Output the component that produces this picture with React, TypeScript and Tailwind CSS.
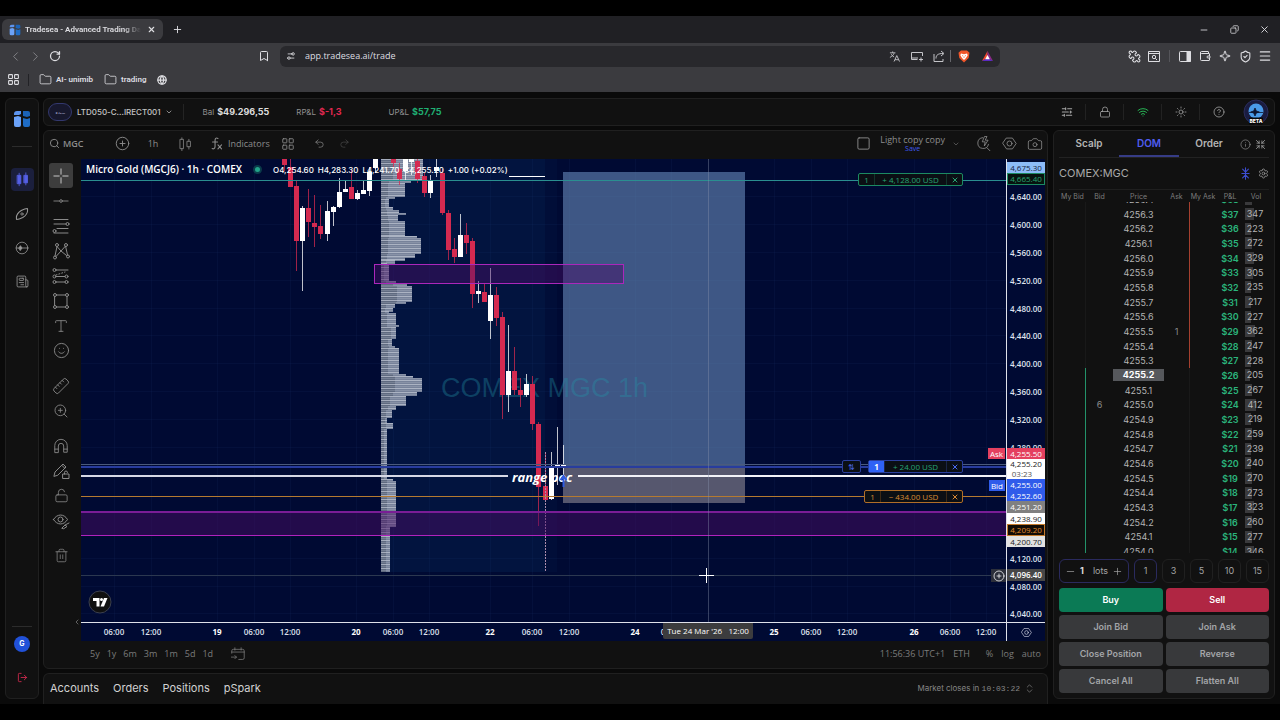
import { useEffect, useRef, useState } from "react";
import type { ReactNode } from "react";
import {
  Bookmark,
  Camera,
  ChevronDown,
  ChevronLeft,
  ChevronRight,
  ChevronsUpDown,
  CircleHelp,
  CirclePlus,
  Copy,
  Folder,
  Globe,
  Info,
  LayoutGrid,
  Lock,
  LockOpen,
  LogOut,
  Menu,
  Minus,
  Newspaper,
  Plus,
  Puzzle,
  Redo2,
  RotateCw,
  Ruler,
  Search,
  Settings,
  Settings2,
  ShieldCheck,
  Shrink,
  Smile,
  Sparkle,
  Square,
  Sun,
  Trash2,
  Type,
  Undo2,
  Wallet,
  Wifi,
  X,
  ZoomIn,
} from "lucide-react";

interface IconButtonProps {
  label: string;
  className?: string;
  children: ReactNode;
}

const IconButton = ({ label, className = "", children }: IconButtonProps) => (
  <button
    type="button"
    aria-label={label}
    className={`flex shrink-0 items-center justify-center ${className}`}
  >
    {children}
  </button>
);

const Glyph = ({ size = 18, children }: { size?: number; children: ReactNode }) => (
  <svg
    width={size}
    height={size}
    viewBox="0 0 18 18"
    fill="none"
    stroke="currentColor"
    strokeWidth="1"
    strokeLinecap="round"
    strokeLinejoin="round"
  >
    {children}
  </svg>
);

const TradeseaLogo = ({ size = 18 }: { size?: number }) => (
  <svg width={size} height={size} viewBox="0 0 18 18">
    <path d="M1 5V4a3 3 0 0 1 3-3h4v3l-2 1z" fill="#5c94ef" />
    <path d="M10 1h5a2 2 0 0 1 2 2v3l-3 1-4-1z" fill="#1b63b8" />
    <path d="M1 7l4-1 3 1v8a2 2 0 0 1-2 2H3a2 2 0 0 1-2-2z" fill="#6ba2f8" />
    <path d="M10 8l4 1 3-1v7a2 2 0 0 1-2 2h-3a2 2 0 0 1-2-2z" fill="#1e6cc6" />
  </svg>
);

const HexSettings = ({ size = 16 }: { size?: number }) => (
  <Glyph size={size}>
    <path d="M5.500 2.500h7L17 9l-4.500 6.500h-7L1 9z" />
    <circle cx="9" cy="9" r="3" />
  </Glyph>
);

/* ---------- browser chrome ---------- */

const BrowserBar = () => (
  <header className="shrink-0 bg-[#3b3b3f] font-['Open_Sans','Noto_Sans',sans-serif] text-[#dedee2]">
    <div className="flex h-[27px] items-center bg-[#202024] pl-[2px]">
      <div className="flex h-[21px] w-[161px] items-center gap-1 rounded-md bg-[#3b3b3f] pl-[7px]">
        <TradeseaLogo size={12} />
        <span className="w-[116px] overflow-hidden whitespace-nowrap font-[Roboto,sans-serif] text-[8px] font-semibold [mask-image:linear-gradient(to_right,black_85%,transparent)]">
          Tradesea - Advanced Trading Dashboard
        </span>
        <IconButton label="Close tab" className="size-3">
          <X size={9} strokeWidth={3} />
        </IconButton>
      </div>
      <IconButton label="New tab" className="ml-1 size-5">
        <Plus size={11} />
      </IconButton>
      <div className="ml-auto flex">
        <IconButton label="Minimize" className="w-[30px]">
          <Minus size={10} />
        </IconButton>
        <IconButton label="Restore" className="w-[30px]">
          <Copy size={9} className="-scale-x-100" />
        </IconButton>
        <IconButton label="Close" className="w-[31px]">
          <X size={11} />
        </IconButton>
      </div>
    </div>

    <div className="grid h-[26px] grid-cols-[280px_1fr_280px] items-center">
      <div className="flex items-center pl-[5px]">
        <IconButton label="Back" className="w-5 text-[#85858a]">
          <ChevronLeft size={15} strokeWidth={1.500} />
        </IconButton>
        <IconButton label="Forward" className="w-5 text-[#85858a]">
          <ChevronRight size={15} strokeWidth={1.500} />
        </IconButton>
        <IconButton label="Reload" className="w-5">
          <RotateCw size={12} strokeWidth={2.500} />
        </IconButton>
        <IconButton label="Bookmark this page" className="ml-auto w-8">
          <Bookmark size={12} />
        </IconButton>
      </div>
      <div className="flex h-[21px] items-center rounded-md bg-[#28282c] pl-[6px]">
        <Settings2 size={10} className="-scale-x-100" />
        <input
          aria-label="Address"
          defaultValue="app.tradesea.ai/trade"
          className="ml-[9px] min-w-0 flex-1 bg-transparent text-[9px] outline-none"
        />
        <div className="flex items-center text-[#c4c4c8]">
          <IconButton label="Translate" className="w-[22px]">
            <svg width="11" height="11" viewBox="0 0 12 12" fill="none" stroke="currentColor">
              <path d="M1 2h6M4 .5V2M5.500 2.500C5 4.500 3 6 1 7M2.500 3.500C3 5 4.500 6 5.500 6.500M5.500 11.500L8.500 5l3 6.500M6.500 9.500h4" />
            </svg>
          </IconButton>
          <IconButton label="Send to device" className="w-[23px]">
            <svg width="12" height="11" viewBox="0 0 12 11" fill="none" stroke="currentColor">
              <path d="M11.500 5V1.500H.5v7h6M1 7h6M8 8.500h4M10 6.500v4" />
            </svg>
          </IconButton>
          <IconButton label="Share" className="w-[22px]">
            <svg width="12" height="12" viewBox="0 0 12 12" fill="none" stroke="currentColor">
              <path d="M1 4v7.500h9V9M3 8.500C3 5 5 3.500 10 3.500M8 1l3 2.500-3 2.500" />
            </svg>
          </IconButton>
          <span className="h-3 w-px bg-[#66666b]" />
          <IconButton label="Brave Shields" className="w-[25px]">
            <svg width="12" height="13" viewBox="0 0 12 13">
              <path d="M3 .5h6l2.500 2.300-.8 5.200L6 12.500 1.300 8 .5 2.800z" fill="#f0562a" />
              <path d="M3 3.500l3 .7 3-.7.7 1.800L8 8l-2 2-2-2-1.700-2.700z" fill="#fff" />
              <path d="M4 5.500l1.200.5M8 5.500L6.800 6M6 6.500v1.500" stroke="#f0562a" strokeWidth=".7" />
            </svg>
          </IconButton>
          <IconButton label="Brave Rewards" className="mr-[2px] w-[22px]">
            <svg width="11" height="10" viewBox="0 0 12 11">
              <path d="M6 0L0 11l6-3z" fill="#f0492d" />
              <path d="M6 0l6 11-6-3z" fill="#8c2a88" />
              <path d="M0 11h12L6 7.500z" fill="#5b2bc4" />
              <path d="M6 4.500L3.500 9h5z" fill="#fff" />
            </svg>
          </IconButton>
        </div>
      </div>
      <div className="flex items-center justify-end pr-[5px]">
        <IconButton label="Extensions" className="w-5">
          <Puzzle size={13} className="-rotate-90" />
        </IconButton>
        <IconButton label="Search tabs" className="mr-[5px] w-5">
          <svg width="12" height="11" viewBox="0 0 12 11" fill="none" stroke="currentColor">
            <path d="M.5.500h11v10H.5zM.5 2.500h11M7.300 7.300l1.700 1.700" />
            <circle cx="6" cy="6" r="1.700" />
          </svg>
        </IconButton>
        <span className="mr-[5px] h-3 w-px bg-[#55555a]" />
        <IconButton label="Sidebar" className="w-5">
          <svg width="12" height="11" viewBox="0 0 12 11" fill="none" stroke="currentColor">
            <rect x=".5" y=".5" width="11" height="10" rx="1" />
            <path d="M8 .5h3.500v10H8z" fill="currentColor" />
          </svg>
        </IconButton>
        <IconButton label="Wallet" className="w-5">
          <Wallet size={12} />
        </IconButton>
        <IconButton label="Leo AI" className="w-5">
          <Sparkle size={12} />
        </IconButton>
        <IconButton label="VPN" className="w-5">
          <ShieldCheck size={13} />
        </IconButton>
        <IconButton label="Menu" className="w-5">
          <Menu size={14} />
        </IconButton>
      </div>
    </div>

    <nav className="flex h-[23px] items-center pb-[2px] pl-[7px] font-[Roboto,sans-serif] text-[8px] font-semibold">
      <LayoutGrid size={13} />
      <span className="ml-[8px] h-3 w-px bg-[#222226]" />
      <a href="#ai-unimib" className="ml-[10px] flex items-center gap-1">
        <Folder size={13} strokeWidth={1.500} />
        AI- unimib
      </a>
      <a href="#trading" className="ml-[11px] flex items-center gap-1">
        <Folder size={13} strokeWidth={1.500} />
        trading
      </a>
      <a href="#site" aria-label="Saved site" className="ml-[11px]">
        <Globe size={10} strokeWidth={3} />
      </a>
    </nav>
  </header>
);

/* ---------- app sidebar and top bar ---------- */

const SideNav = () => (
  <aside className="mb-[5px] flex w-[34px] shrink-0 flex-col items-center rounded-md border border-[#202020] bg-[#111111] text-[#9a9a9a]">
    <div className="mt-[11px]">
      <TradeseaLogo size={18} />
    </div>
    <span className="mt-[18px] h-px w-5 bg-[#2c2c2c]" />
    <nav className="mt-[21px] flex flex-col gap-[11px]">
      <IconButton label="Chart" className="size-[23px] rounded-[4px] bg-[#1b1f3d] text-[#5560e6]">
        <Glyph size={15}>
          <rect x="3" y="4" width="4" height="10" fill="currentColor" />
          <rect x="11" y="4" width="4" height="9" fill="currentColor" />
          <path d="M5 1.500v15M13 1v14.500" />
        </Glyph>
      </IconButton>
      <IconButton label="Explore" className="size-[23px]">
        <Glyph size={14}>
          <path d="M2 16C1 11 4 7 8 4.500 11 3 14 2 16 2c1 5-2 9-6 11.500C7 15 4 16 2 16z" strokeWidth="1.300" />
          <circle cx="9" cy="9" r="1.500" />
        </Glyph>
      </IconButton>
      <IconButton label="Replay" className="size-[23px]">
        <Glyph size={14}>
          <circle cx="9" cy="9" r="7.500" />
          <path d="M1.500 9h15M5 9l2-3 2 3-2 3z" fill="currentColor" />
        </Glyph>
      </IconButton>
      <IconButton label="News" className="size-[23px]">
        <Newspaper size={13} strokeWidth={1.500} className="-scale-x-100" />
      </IconButton>
    </nav>
    <span className="mt-auto h-px w-5 bg-[#2c2c2c]" />
    <button
      type="button"
      className="mt-[9px] size-4 rounded-full bg-[#2151d8] font-[Inter,sans-serif] text-[7px] font-bold text-white"
    >
      G
    </button>
    <IconButton label="Log out" className="mb-[15px] mt-[20px] text-[#c9284c]">
      <LogOut size={11} />
    </IconButton>
  </aside>
);

const topActions = [
  {
    label: "Preferences",
    icon: (
      <Glyph size={12}>
        <path d="M2 4h5M10 4h6M2 9h9M14 9h2M2 14h3M8 14h8M7 2.500v3M14 7.500v3M5 12.500v3" strokeWidth="1.600" />
      </Glyph>
    ),
  },
  { label: "Lock", icon: <Lock size={12} strokeWidth={1.500} /> },
  { label: "Connection", icon: <Wifi size={12} className="text-[#27b354]" /> },
  { label: "Theme", icon: <Sun size={12} strokeWidth={1.500} /> },
  { label: "Help", icon: <CircleHelp size={12} strokeWidth={1.500} /> },
];

const TopBar = () => (
  <header className="flex h-[28px] shrink-0 items-center rounded-md border border-[#202020] bg-[#111111] pl-1 text-[8px] text-[#8f8f8f]">
    <button type="button" className="flex items-center font-medium text-[#c4c4c4]">
      <span className="mr-[5px] flex h-[18px] w-6 items-center justify-center rounded-full border border-[#33386e] bg-[#17182d] text-[6px] text-[#8d90b5]">
        •~–
      </span>
      LTD050-C...IRECT001
      <ChevronDown size={8} className="ml-1" />
    </button>
    <span className="ml-[10px] mr-[19px] h-4 w-px bg-[#242424]" />
    <span>Bal</span>
    <span className="ml-[3px] text-[9px] font-bold text-[#dcdcdc]">$49.296,55</span>
    <span className="ml-[27px]">RP&amp;L</span>
    <span className="ml-[3px] text-[9px] font-bold text-[#e02850]">$-1,3</span>
    <span className="ml-[47px]">UP&amp;L</span>
    <span className="ml-[3px] text-[9px] font-bold text-[#1fae72]">$57,75</span>
    <div className="ml-auto flex text-[#a8a8a8]">
      {topActions.map(({ label, icon }) => (
        <IconButton
          key={label}
          label={label}
          className="h-4 w-[38px] border-r border-[#222222] last:border-r-0"
        >
          {icon}
        </IconButton>
      ))}
    </div>
    <button type="button" aria-label="Tradesea beta" className="flex w-[36px] justify-center">
      <svg width="26" height="26" viewBox="0 0 26 26">
        <circle cx="13" cy="13" r="12" fill="#1a1c40" stroke="#2a2d5c" />
        <circle cx="13" cy="12" r="7.500" fill="#4a9be8" />
        <path d="M6 13.500h14M12 9l1.300 3 3 1-3 1-1.300 3-1.300-3-3-1 3-1z" fill="#0e1530" stroke="#0e1530" strokeWidth=".8" />
        <rect x="6" y="18.500" width="14" height="7" rx="1" fill="#080808" />
        <text x="13" y="24" textAnchor="middle" fontSize="5" fontWeight="800" fill="#ffffff">
          BETA
        </text>
      </svg>
    </button>
  </header>
);

/* ---------- chart ---------- */

const ChartToolbar = () => (
  <div className="flex h-[28px] shrink-0 items-center pb-[3px] text-[9px] text-[#8c8c8c]">
    <button type="button" className="flex w-[66px] items-center gap-[3px] pl-[5px] font-semibold">
      <Search size={11} />
      MGC
    </button>
    <IconButton label="Compare" className="w-6">
      <CirclePlus size={15} strokeWidth={1.500} />
    </IconButton>
    <button type="button" className="w-[38px]">
      1h
    </button>
    <IconButton label="Chart type" className="w-[26px]">
      <Glyph size={14}>
        <path d="M3 3h4v12H3zM5 1v2M5 15v2.500M12 5.500h4v7h-4zM14 3v2.500M14 12.500v3" />
      </Glyph>
    </IconButton>
    <button type="button" className="flex w-[78px] items-center gap-[5px] pl-[12px]">
      <Glyph size={13}>
        <path d="M11 2c-3-1.500-4 0-4 3v8c0 3-2 4-4 3M3.500 7h7M11 11l5 5.500M16 11l-5 5.500" strokeWidth="1.500" />
      </Glyph>
      Indicators
    </button>
    <IconButton label="Templates" className="w-6">
      <LayoutGrid size={14} strokeWidth={1.500} />
    </IconButton>
    <IconButton label="Undo" className="ml-[7px] w-6">
      <Undo2 size={11} strokeWidth={1.500} />
    </IconButton>
    <IconButton label="Redo" className="w-[26px] text-[#4a4a4a]">
      <Redo2 size={11} strokeWidth={1.500} />
    </IconButton>

    <div className="ml-auto flex items-center">
      <IconButton label="Layout setup" className="mr-[9px]">
        <Square size={15} strokeWidth={1.500} />
      </IconButton>
      <button type="button" className="flex flex-col items-center leading-[10px]">
        Light copy copy
        <span className="text-[7px] leading-[7px] text-[#3f5bf0]">Save</span>
      </button>
      <IconButton label="Manage layouts" className="mr-[3px] w-[22px]">
        <ChevronDown size={8} strokeWidth={1.500} />
      </IconButton>
      <IconButton label="Quick search" className="w-[26px]">
        <Glyph size={15}>
          <path d="M8 2a6.500 6.500 0 1 0 7 8M13 14l4 4M10 1L7.500 7H11l-1 5 4.500-7H11l2-4z" />
        </Glyph>
      </IconButton>
      <IconButton label="Chart settings" className="w-[26px]">
        <HexSettings size={15} />
      </IconButton>
      <IconButton label="Snapshot" className="w-[25px]">
        <Camera size={16} strokeWidth={1.200} />
      </IconButton>
    </div>
  </div>
);

const toolGroups = [
  [
    {
      label: "Trend line",
      icon: (
        <Glyph size={16}>
          <path d="M1 9h6M11 9h6" />
          <circle cx="9" cy="9" r="1.500" />
        </Glyph>
      ),
    },
    {
      label: "Fibonacci retracement",
      icon: (
        <Glyph>
          <path d="M2 2.500h14M2 7h12M5 11.500h11M2 16h14" />
          <circle cx="15.500" cy="7" r="1.500" />
          <circle cx="2.500" cy="14" r="1.500" />
        </Glyph>
      ),
    },
    {
      label: "Pattern",
      icon: (
        <Glyph>
          <path d="M3 14L5 4.500l4 4.500 4.500-5L15.500 13M4 14.500L9 9l5.500 4.500" />
          <circle cx="3" cy="15.500" r="1.500" />
          <circle cx="5" cy="3" r="1.500" />
          <circle cx="14" cy="3" r="1.500" />
          <circle cx="16" cy="14.500" r="1.500" />
        </Glyph>
      ),
    },
    {
      label: "Prediction",
      icon: (
        <Glyph>
          <path d="M4 3h12M4 9.500h9M4 15h9" />
          <path d="M4 8l9-3" strokeDasharray="1 2" />
          <circle cx="2.500" cy="3" r="1.500" />
          <circle cx="2.500" cy="9.500" r="1.500" />
          <circle cx="2.500" cy="15" r="1.500" />
          <circle cx="14.500" cy="9.500" r="1.500" />
          <circle cx="14.500" cy="15" r="1.500" />
        </Glyph>
      ),
    },
    {
      label: "Shapes",
      icon: (
        <Glyph>
          <rect x="3" y="3" width="12" height="12" />
          <circle cx="3" cy="3" r="1.500" fill="#111111" />
          <circle cx="15" cy="3" r="1.500" fill="#111111" />
          <circle cx="3" cy="15" r="1.500" fill="#111111" />
          <circle cx="15" cy="15" r="1.500" fill="#111111" />
        </Glyph>
      ),
    },
    { label: "Text", icon: <Type size={16} strokeWidth={1.300} /> },
    { label: "Icons", icon: <Smile size={17} strokeWidth={1.300} /> },
  ],
  [
    { label: "Measure", icon: <Ruler size={18} strokeWidth={1.200} className="-scale-x-100" /> },
    { label: "Zoom in", icon: <ZoomIn size={16} strokeWidth={1.300} /> },
  ],
  [
    {
      label: "Magnet",
      icon: (
        <Glyph size={16}>
          <path d="M2 16V8.500a7 7 0 0 1 14 0V16h-4V9a3 3 0 0 0-6 0v7zM2 12.500h4M12 12.500h4" />
        </Glyph>
      ),
    },
    {
      label: "Keep drawing",
      icon: (
        <Glyph>
          <path d="M2 14l1-4 8-8 3 3-8 8zM10 3.500l2.500 2.500M11 12h6v4.500h-6zM12.500 12v-1.500a1.500 1.500 0 0 1 3 0" />
        </Glyph>
      ),
    },
    { label: "Lock drawings", icon: <LockOpen size={15} strokeWidth={1.300} /> },
    {
      label: "Hide drawings",
      icon: (
        <Glyph>
          <path d="M1.500 7.500C5 1.500 12 1.500 15.500 7.500 12 13.500 5 13.500 1.500 7.500zM10 16l3-3 2 1.500-3 2zM13 13l4-2" />
          <circle cx="8.500" cy="7.500" r="2.500" />
        </Glyph>
      ),
    },
  ],
  [{ label: "Remove drawings", icon: <Trash2 size={15} strokeWidth={1.200} /> }],
];

const DrawingTools = () => (
  <div className="relative flex w-[37px] shrink-0 flex-col gap-[10px] pl-[5px] pt-1 text-[#8a8a8a]">
    {toolGroups.map((group, i) => (
      <div key={group[0].label} className="flex w-6 flex-col">
        {i === 0 && (
          <IconButton label="Cross" className="h-[25px] w-6 rounded-[3px] bg-[#3d3d3d] text-[#d8d8d8]">
            <Glyph size={16}>
              <path d="M9 1v6M9 11v6M1 9h6M11 9h6" />
            </Glyph>
          </IconButton>
        )}
        {group.map(({ label, icon }) => (
          <IconButton key={label} label={label} className="h-[25px] w-6">
            {icon}
          </IconButton>
        ))}
      </div>
    ))}
    <IconButton label="Hide toolbar" className="absolute bottom-[15px] right-0">
      <ChevronLeft size={8} />
    </IconButton>
  </div>
);

// x, high, body top, body bottom, low, 1 = up
const candles = [
  [203, -10, 0, 6, 12, 0],
  [209, 0, 8, 28, 28, 0],
  [215, 21, 27, 82, 112, 0],
  [221, 47, 49, 82, 132, 1],
  [227, 30, 49, 63, 78, 0],
  [233, 36, 64, 68, 88, 0],
  [239, 46, 67, 75, 80, 0],
  [246, 42, 52, 75, 82, 1],
  [252, 47, 48, 53, 67, 1],
  [258, 19, 33, 48, 49, 1],
  [264, 21, 30, 33, 33, 1],
  [270, 11, 28, 40, 40, 0],
  [276, 31, 34, 40, 41, 1],
  [282, 21, 31, 35, 35, 1],
  [288, 8, 13, 32, 37, 1],
  [294, -5, 0, 9, 14, 1],
  [312, -5, 0, 4, 8, 0],
  [318, 4, 10, 20, 26, 0],
  [324, -5, 0, 12, 22, 1],
  [330, -5, 0, 3, 16, 1],
  [336, -5, 2, 20, 24, 0],
  [343, 14, 17, 34, 38, 0],
  [349, 16, 21, 34, 39, 1],
  [355, -5, 8, 12, 18, 1],
  [361, 10, 14, 54, 56, 0],
  [367, 51, 54, 91, 101, 0],
  [373, 79, 90, 98, 104, 0],
  [379, 55, 76, 98, 98, 1],
  [385, 64, 76, 84, 95, 0],
  [391, 79, 82, 135, 149, 0],
  [397, 122, 132, 135, 144, 1],
  [403, 125, 133, 143, 143, 0],
  [409, 109, 136, 162, 180, 1],
  [415, 128, 136, 159, 167, 0],
  [421, 153, 158, 236, 260, 0],
  [427, 166, 212, 236, 253, 1],
  [433, 188, 212, 231, 236, 0],
  [439, 219, 231, 236, 248, 0],
  [445, 215, 225, 236, 238, 1],
  [451, 217, 225, 265, 271, 0],
  [457, 263, 265, 328, 367, 0],
  [464, 293, 327, 341, 341, 0],
  [470, 293, 308, 340, 341, 1],
  [476, 268, 306, 308, 326, 1],
  [482, 286, 306, 308, 327, 1],
];

// volume profile: start y, end y, bar width, inner bar width
const profile = [
  [0, 22, 42, 12],
  [22, 24, 30, 8],
  [24, 38, 24, 7],
  [38, 40, 14, 5],
  [40, 48, 8, 4],
  [48, 51, 12, 5],
  [51, 54, 18, 6],
  [54, 56, 25, 6],
  [56, 62, 17, 7],
  [62, 77, 24, 8],
  [77, 79, 36, 8],
  [79, 95, 40, 7],
  [95, 98, 34, 6],
  [98, 101, 24, 6],
  [101, 104, 14, 5],
  [104, 106, 6, 3],
  [106, 122, 8, 3],
  [122, 124, 15, 5],
  [124, 127, 26, 12],
  [127, 143, 31, 16],
  [143, 145, 25, 15],
  [145, 149, 14, 5],
  [149, 152, 12, 4],
  [152, 154, 8, 4],
  [154, 166, 15, 6],
  [166, 168, 18, 6],
  [168, 180, 15, 10],
  [180, 187, 11, 7],
  [187, 189, 14, 8],
  [189, 215, 18, 7],
  [215, 217, 25, 12],
  [217, 219, 32, 14],
  [219, 233, 41, 14],
  [233, 237, 36, 12],
  [237, 247, 25, 9],
  [247, 251, 15, 7],
  [251, 259, 11, 5],
  [259, 264, 6, 4],
  [264, 270, 12, 5],
  [270, 320, 6, 3],
  [320, 322, 12, 6],
  [322, 367, 15, 6],
  [367, 413, 9, 5],
];

const profileRows = profile.flatMap(([from, to, width, inner]) => {
  const rows: { y: number; width: number; inner: number }[] = [];
  for (let y = from; y < to; y += 2) rows.push({ y, width, inner });
  return rows;
});

const timeTicks: [number, string][] = [
  [33, "06:00"],
  [70, "12:00"],
  [136, "19"],
  [173, "06:00"],
  [209, "12:00"],
  [275, "20"],
  [312, "06:00"],
  [348, "12:00"],
  [409, "22"],
  [451, "06:00"],
  [488, "12:00"],
  [554, "24"],
  [590, "06:00"],
  [693, "25"],
  [730, "06:00"],
  [766, "12:00"],
  [833, "26"],
  [869, "06:00"],
  [905, "12:00"],
];

const priceTicks: [number, string][] = [
  [37, "4,640.00"],
  [65, "4,600.00"],
  [93, "4,560.00"],
  [121, "4,520.00"],
  [149, "4,480.00"],
  [176, "4,440.00"],
  [204, "4,400.00"],
  [232, "4,360.00"],
  [260, "4,320.00"],
  [288, "4,280.00"],
  [399, "4,120.00"],
  [427, "4,080.00"],
  [454, "4,040.00"],
];

const PlotDrawing = () => (
  <svg className="absolute inset-0 h-full w-full" aria-hidden="true">
    <rect x="300" y="0" width="164" height="413" fill="#02143f" />
    <rect x="464" y="0" width="12" height="413" fill="#010e38" />
    {timeTicks.map(([x]) => (
      <line key={x} x1={x + 0.5} x2={x + 0.5} y1="0" y2="100%" stroke="#1b3a70" strokeOpacity=".14" />
    ))}
    {priceTicks.map(([y]) => (
      <line key={y} x1="0" x2="100%" y1={y + 0.5} y2={y + 0.5} stroke="#1b3a70" strokeOpacity=".14" />
    ))}

    {profileRows.map(({ y, width, inner }) => (
      <g key={y}>
        <rect x="300" y={y} width={width} height="2" fill="#77829a" />
        <rect x="300" y={y} width={inner} height="2" fill="#5f6a80" />
        <rect x="300" y={y} width={width} height="1" fill="#bcc3d0" fillOpacity={y % 4 < 2 ? 0.75 : 0.25} />
      </g>
    ))}

    <rect x="482" y="13" width="182" height="294" fill="#6487b8" fillOpacity=".62" />
    <rect x="482" y="307" width="182" height="37" fill="#8f8a96" fillOpacity=".6" />
    <text
      x="360"
      y="238"
      fontSize="27"
      fontFamily="Liberation Sans, sans-serif"
      fill="#2296a8"
      fillOpacity=".36"
    >
      COMEX MGC 1h
    </text>

    {candles.map(([x, high, top, bottom, low, up]) => (
      <g key={x} fill={up ? "#ffffff" : "#d42a50"}>
        <rect x={x} y={high} width="1" height={low - high} fillOpacity=".75" />
        <rect x={x - 2} y={top} width="5" height={bottom - top} />
      </g>
    ))}
    <line x1="464.500" x2="464.500" y1="293" y2="413" stroke="#ab8cab" strokeDasharray="2 1" />

    <rect x="0" y="353" width="100%" height="24" fill="#4a0d66" fillOpacity=".48" />
    <rect x="0" y="352" width="100%" height="2" fill="#7a1d96" />
    <rect x="0" y="376" width="100%" height="1" fill="#b122bd" />
    <rect x="293.500" y="105.500" width="249" height="19" fill="#4a0d66" fillOpacity=".45" stroke="#ab27bb" />

    <rect x="0" y="21" width="100%" height="1" fill="#2a8f90" />
    <rect x="428" y="17" width="36" height="1" fill="#ffffff" />
    <rect x="0" y="305" width="100%" height="1" fill="#4b5a7c" />
    <rect x="0" y="307" width="100%" height="2" fill="#283c9e" />
    <rect x="0" y="316" width="427" height="2" fill="#d6d8e6" />
    <rect x="497" y="316" width="100%" height="2" fill="#f2f2f8" />
    <rect x="0" y="337" width="100%" height="1" fill="#b57a30" />
    <rect x="0" y="416" width="100%" height="1" fill="#2c3850" />
    <line x1="627.500" x2="627.500" y1="0" y2="100%" stroke="#8792ab" strokeOpacity=".4" />

    <text
      x="431"
      y="323"
      fontSize="13"
      fontStyle="italic"
      fontWeight="700"
      fontFamily="Open Sans, sans-serif"
      fill="#ffffff"
    >
      range poc
    </text>
    <path d="M482.500 328v-10M479.500 321l3-4 3 4" stroke="#2f5be0" strokeWidth="2" fill="none" />
    <path d="M625.500 409v15M618 416.500h15" stroke="#ffffff" />
  </svg>
);

interface OrderTagProps {
  amount: string;
  box: string;
  split: string;
  width: string;
  qty?: string;
  value?: string;
}

const OrderTag = ({ amount, box, split, width, qty = "", value = "" }: OrderTagProps) => (
  <div
    className={`flex h-[13px] items-center rounded-[2px] border bg-[#0b0f14] text-[8px] font-medium leading-none ${width} ${box}`}
  >
    <span className={`flex h-full w-[15px] items-center justify-center ${qty}`}>1</span>
    <span
      className={`flex h-full min-w-0 flex-1 items-center justify-center whitespace-nowrap border-x ${split} ${value}`}
    >
      {amount}
    </span>
    <IconButton label="Cancel order" className="w-[15px]">
      <X size={8} strokeWidth={3} />
    </IconButton>
  </div>
);

const PriceAxis = () => (
  <div className="relative w-[39px] shrink-0 border-l border-[#dfe1ea] text-center text-[8px] font-semibold leading-[11px] text-[#dfe2ee]">
    {priceTicks.map(([y, label]) => (
      <span key={label} className="absolute inset-x-0 -translate-y-1/2" style={{ top: y }}>
        {label}
      </span>
    ))}
    <div className="absolute inset-x-0 top-[3px] font-normal">
      <div className="bg-[#8dbcf8] text-[#14233f]">4,675.30</div>
      <div className="border border-[#1c8a62] bg-[#07130f] leading-[10px] text-[#27a474]">4,665.40</div>
    </div>
    <div className="absolute inset-x-0 top-[289px] font-medium">
      <div className="bg-[#e4405f] text-white">4,255.50</div>
      <div className="bg-white leading-[10px] text-[#1c1c1c]">
        4,255.20
        <div className="pr-2 text-[#555555]">03:23</div>
      </div>
      <div className="bg-[#2f5bea] text-white">4,255.00</div>
      <div className="bg-[#2f5bea] text-white">4,252.60</div>
      <div className="bg-[#808080] leading-[12px] text-white">4,251.20</div>
      <div className="bg-white text-[#1c1c1c]">4,238.90</div>
      <div className="border border-[#c47a2b] bg-[#120c05] leading-[10px] text-[#e08a2e]">4,209.20</div>
      <div className="bg-[#e2e2e2] text-[#1c1c1c]">4,200.70</div>
    </div>
    <div className="absolute inset-x-0 top-[410px] bg-[#474747] leading-[12px] text-white">4,096.40</div>
  </div>
);

const Chart = () => (
  <div className="flex min-w-0 flex-1 flex-col bg-[#000a33] font-['Open_Sans','Noto_Sans',sans-serif]">
    <div className="flex min-h-0 flex-1">
      <div className="relative min-w-0 flex-1 overflow-hidden">
        <PlotDrawing />
        <div className="absolute left-[5px] top-[3px] flex items-center whitespace-nowrap text-white">
          <h1 className="text-[10px] font-semibold">Micro Gold (MGCJ6) · 1h · COMEX</h1>
          <span className="mx-[11px] size-[9px] rounded-full border-2 border-[#0a3b4a] bg-[#22a389]" />
          <p className="flex gap-1 font-[Inter,sans-serif] text-[8px] font-medium">
            <span>O4,254.60</span>
            <span>H4,283.30</span>
            <span>L4,241.70</span>
            <span>C4,255.20</span>
            <span>+1.00 (+0.02%)</span>
          </p>
        </div>

        <div className="absolute right-[43px] top-[14px]">
          <OrderTag
            amount="+ 4,128.00 USD"
            box="border-[#1c8a62] text-[#27a474]"
            split="border-[#12352b]"
            width="w-[105px]"
          />
        </div>
        <div className="absolute right-[43px] top-[301px] flex gap-[7px]">
          <span className="flex h-[13px] w-[19px] items-center justify-center rounded-[2px] border border-[#2b3f9c] bg-[#0b0f14] text-[8px] text-[#4663e0]">
            ⇅
          </span>
          <OrderTag
            amount="+ 24.00 USD"
            box="border-[#2b3f9c] text-[#4a6cf5]"
            split="border-[#1b2547]"
            width="w-[95px]"
            qty="bg-[#2f62f5] font-bold text-white"
            value="text-[#27a474]"
          />
        </div>
        <div className="absolute right-[43px] top-[331px]">
          <OrderTag
            amount="− 434.00 USD"
            box="border-[#b06e28] text-[#d98a33]"
            split="border-[#3d2a16]"
            width="w-[99px]"
          />
        </div>

        <span className="absolute right-px top-[289px] bg-[#e4405f] px-[2px] text-[8px] leading-[11px] text-white">
          Ask
        </span>
        <span className="absolute right-px top-[321px] bg-[#2f5bea] px-[2px] text-[8px] leading-[11px] text-white">
          Bid
        </span>
        <IconButton label="Add at price" className="absolute right-0 top-[410px] h-[13px] w-[15px] bg-[#2c2f3a] text-white">
          <CirclePlus size={12} strokeWidth={1.500} />
        </IconButton>

        <svg className="absolute bottom-[8px] left-[7px]" width="24" height="24" viewBox="0 0 24 24" aria-label="TradingView">
          <circle cx="12" cy="12" r="11" fill="#101010" stroke="#3a3f4d" />
          <path d="M5 8h6.500v8.500H8.500V11H5z" fill="#ffffff" />
          <circle cx="13.500" cy="9.500" r="1.500" fill="#ffffff" />
          <path d="M16 8h3.500l-3.500 8.500h-3.500z" fill="#ffffff" />
        </svg>
      </div>
      <PriceAxis />
    </div>
    <div className="flex h-[19px] shrink-0 border-t border-[#dfe1ea]">
      <div className="relative flex-1 overflow-hidden text-[8px] leading-[17px] text-[#dfe2ee]">
        {timeTicks.map(([x, label]) => (
          <span
            key={x}
            className={`absolute -translate-x-1/2 ${label.includes(":") ? "font-semibold" : "font-bold text-white"}`}
            style={{ left: x }}
          >
            {label}
          </span>
        ))}
        <span className="absolute left-[582px] w-[90px] rounded-b-[2px] bg-[#3c3c3e] text-center leading-[16px] text-white">
          Tue 24 Mar '26 &nbsp; 12:00
        </span>
      </div>
      <IconButton label="Scale settings" className="w-[39px] border-l border-[#dfe1ea] text-[#dfe2ee]">
        <HexSettings size={11} />
      </IconButton>
    </div>
  </div>
);

const ranges = ["5y", "1y", "6m", "3m", "1m", "5d", "1d"];

const RangeBar = () => (
  <div className="flex h-[27px] shrink-0 items-center pb-px pl-[46px] pr-[6px] text-[9px] text-[#7c7c7c]">
    <div className="flex gap-[7px]">
      {ranges.map((range) => (
        <button key={range} type="button">
          {range}
        </button>
      ))}
    </div>
    <IconButton label="Go to date" className="ml-[18px]">
      <Glyph size={14}>
        <path d="M1 8V5a2 2 0 0 1 2-2h12a2 2 0 0 1 2 2v9a2 2 0 0 1-2 2h-5M1 6.500h16M5 1v3M13 1v3M0 13h7M5 11l2 2-2 2" />
      </Glyph>
    </IconButton>
    <div className="ml-auto flex">
      <button type="button">11:56:36 UTC+1</button>
      <button type="button" className="ml-2">
        ETH
      </button>
      <button type="button" className="ml-4">
        %
      </button>
      <button type="button" className="ml-2">
        log
      </button>
      <button type="button" className="ml-2">
        auto
      </button>
    </div>
  </div>
);

const ChartPanel = () => (
  <section className="flex min-h-0 flex-1 flex-col rounded-md border border-[#202020] bg-[#111111] font-['Open_Sans','Noto_Sans',sans-serif]">
    <ChartToolbar />
    <div className="flex min-h-0 flex-1 pr-[2px]">
      <DrawingTools />
      <Chart />
    </div>
    <RangeBar />
  </section>
);

const BottomTabs = () => (
  <footer className="flex h-[31px] shrink-0 items-center rounded-t-md border border-b-0 border-[#202020] bg-[#111111] pb-px pl-[6px] pr-3 text-[11px] text-[#d2d2d2]">
    <nav className="flex gap-[14px]">
      <button type="button">Accounts</button>
      <button type="button">Orders</button>
      <button type="button">Positions</button>
      <button type="button">pSpark</button>
    </nav>
    <p className="ml-auto text-[8px] text-[#858585]">
      Market closes in <span className="font-['Liberation_Mono',monospace]">10:03:22</span>
    </p>
    <IconButton label="Expand" className="ml-1 text-[#858585]">
      <ChevronsUpDown size={11} strokeWidth={1.500} />
    </IconButton>
  </footer>
);

/* ---------- depth of market ---------- */

const volumes = [
  248, 347, 223, 272, 329, 305, 235, 217, 227, 362, 247, 228, 205, 267, 412, 219, 259, 239, 240, 270, 273, 323, 260,
  277, 346,
];

const LAST = 12;

const levels = volumes.map((volume, i) => ({
  price: ((42564 - i) / 10).toFixed(1),
  pnl: 38 - i,
  volume,
  bid: i === 14 ? "6" : "",
  ask: i === 9 ? "1" : "",
}));

const Dom = () => {
  const ladder = useRef<HTMLDivElement>(null);

  useEffect(() => {
    if (ladder.current) ladder.current.scrollTop = 10;
  }, []);

  return (
    <div ref={ladder} className="min-h-0 flex-1 overflow-y-auto [scrollbar-width:none]">
      <table className="h-[380px] w-full table-fixed border-separate border-spacing-0 text-center text-[9px] leading-[11px] text-[#b4b4b4]">
        <colgroup>
          <col className="w-[27px]" />
          <col className="w-[27px]" />
          <col />
          <col className="w-[25px]" />
          <col className="w-[28px]" />
          <col className="w-[26px]" />
          <col className="w-[26px]" />
        </colgroup>
        <thead className="sticky top-0 z-10 bg-[#111111]">
          <tr className="h-[13px] whitespace-nowrap text-[7px] text-[#7d7d7d] [&>th]:border-t [&>th]:border-[#1f1f1f] [&>th]:p-0 [&>th]:font-normal">
            <th>My Bid</th>
            <th>Bid</th>
            <th>Price</th>
            <th>Ask</th>
            <th>My Ask</th>
            <th>P&amp;L</th>
            <th>Vol</th>
          </tr>
        </thead>
        <tbody>
          {levels.map((level, i) => (
            <tr key={level.price} className="[&>td]:p-0">
              <td className={`border-r ${i >= LAST ? "border-[#23936a]" : "border-[#191919]"}`} />
              <td className="text-[#8c8c8c]">{level.bid}</td>
              <td>
                <span
                  className={
                    i === LAST
                      ? "block bg-[#56585c] font-bold leading-[12px] text-white"
                      : "block"
                  }
                >
                  {level.price}
                </span>
              </td>
              <td className="text-[#8c8c8c]">{level.ask}</td>
              <td className={`border-l ${i < LAST ? "border-[#a5402f]" : "border-[#191919]"}`} />
              <td className="font-semibold text-[#2bb57c]">${level.pnl}</td>
              <td>
                <div className="relative ml-[2px] h-[12px] pr-[4px]">
                  <span
                    className="absolute left-0 top-0 h-full bg-[#3a3a3c]"
                    style={{ width: Math.round(level.volume / 38) }}
                  />
                  <span className="relative">{level.volume}</span>
                </div>
              </td>
            </tr>
          ))}
        </tbody>
      </table>
    </div>
  );
};

const tabs = ["Scalp", "DOM", "Order"];
const presets = [1, 3, 5, 10, 15];
const actions = ["Join Bid", "Join Ask", "Close Position", "Reverse", "Cancel All", "Flatten All"];

const OrderPanel = () => {
  const [tab, setTab] = useState<string>("DOM");
  const [lots, setLots] = useState<number>(1);

  return (
    <section className="mb-[5px] flex w-[222px] shrink-0 flex-col rounded-md border border-[#202020] bg-[#111111] px-[5px] pb-[5px]">
      <div className="flex h-[27px] shrink-0 border-b border-[#222222] text-[#8f8f8f]">
        {tabs.map((name) => (
          <button
            key={name}
            type="button"
            onClick={() => setTab(name)}
            className={`w-[60px] border-b-2 text-[10px] font-semibold ${
              tab === name ? "border-[#363c86] text-[#4f5df0]" : "border-transparent text-[#b4b4b4]"
            }`}
          >
            {name}
          </button>
        ))}
        <IconButton label="Info" className="w-[13px]">
          <Info size={11} strokeWidth={1.500} />
        </IconButton>
        <IconButton label="Collapse" className="w-[17px]">
          <Shrink size={11} />
        </IconButton>
      </div>
      <div className="flex h-[31px] shrink-0 items-center text-[11px] text-[#a9a9a9]">
        COMEX:MGC
        <IconButton label="Recenter" className="ml-auto w-[26px] text-[#3d4ed0]">
          <Glyph size={13}>
            <path d="M9 1v16M5 3l4 4 4-4M5 15l4-4 4 4M4 9h10" strokeWidth="1.500" />
          </Glyph>
        </IconButton>
        <IconButton label="DOM settings" className="w-[11px]">
          <Settings size={11} strokeWidth={1.500} />
        </IconButton>
      </div>
      <Dom />
      <div className="mt-[6px] flex h-[24px] shrink-0 justify-between text-[9px] text-[#a5a5a5]">
        <div className="flex w-[70px] items-center justify-center rounded-md border border-[#2a2a5e]">
          <IconButton label="Fewer lots" className="w-3">
            <Minus size={11} strokeWidth={1.500} />
          </IconButton>
          <input
            id="lots"
            value={lots}
            onChange={(e) => setLots(Number(e.target.value) || 1)}
            className="w-[10px] bg-transparent text-center font-bold text-[#dddddd] outline-none"
          />
          <label htmlFor="lots" className="ml-[6px] mr-[3px]">
            lots
          </label>
          <IconButton label="More lots" className="w-3">
            <Plus size={11} strokeWidth={1.500} />
          </IconButton>
        </div>
        {presets.map((n) => (
          <button
            key={n}
            type="button"
            onClick={() => setLots(n)}
            className={`w-[23px] rounded-md border ${lots === n ? "border-[#2a2a5e]" : "border-[#202020]"}`}
          >
            {n}
          </button>
        ))}
      </div>
      <div className="mt-[5px] grid shrink-0 auto-rows-[24px] grid-cols-2 gap-[3px] text-[9px] font-semibold text-[#a3a5a8]">
        <button type="button" className="rounded-[4px] bg-[#0b7a55] text-white">
          Buy
        </button>
        <button type="button" className="rounded-[4px] bg-[#b02643] text-white">
          Sell
        </button>
        {actions.map((action) => (
          <button key={action} type="button" className="rounded-[4px] bg-[#38393b]">
            {action}
          </button>
        ))}
      </div>
    </section>
  );
};

const App = () => (
  <div className="flex h-screen flex-col bg-black py-4">
    <BrowserBar />
    <main className="flex min-h-0 flex-1 gap-1 bg-[#0a0a0a] px-[5px] pt-[6px] font-[Inter,sans-serif]">
      <SideNav />
      <div className="flex min-w-0 flex-1 flex-col gap-1">
        <TopBar />
        <div className="flex min-h-0 flex-1 gap-[5px]">
          <div className="flex min-w-0 flex-1 flex-col gap-1">
            <ChartPanel />
            <BottomTabs />
          </div>
          <OrderPanel />
        </div>
      </div>
    </main>
  </div>
);

export default App;
